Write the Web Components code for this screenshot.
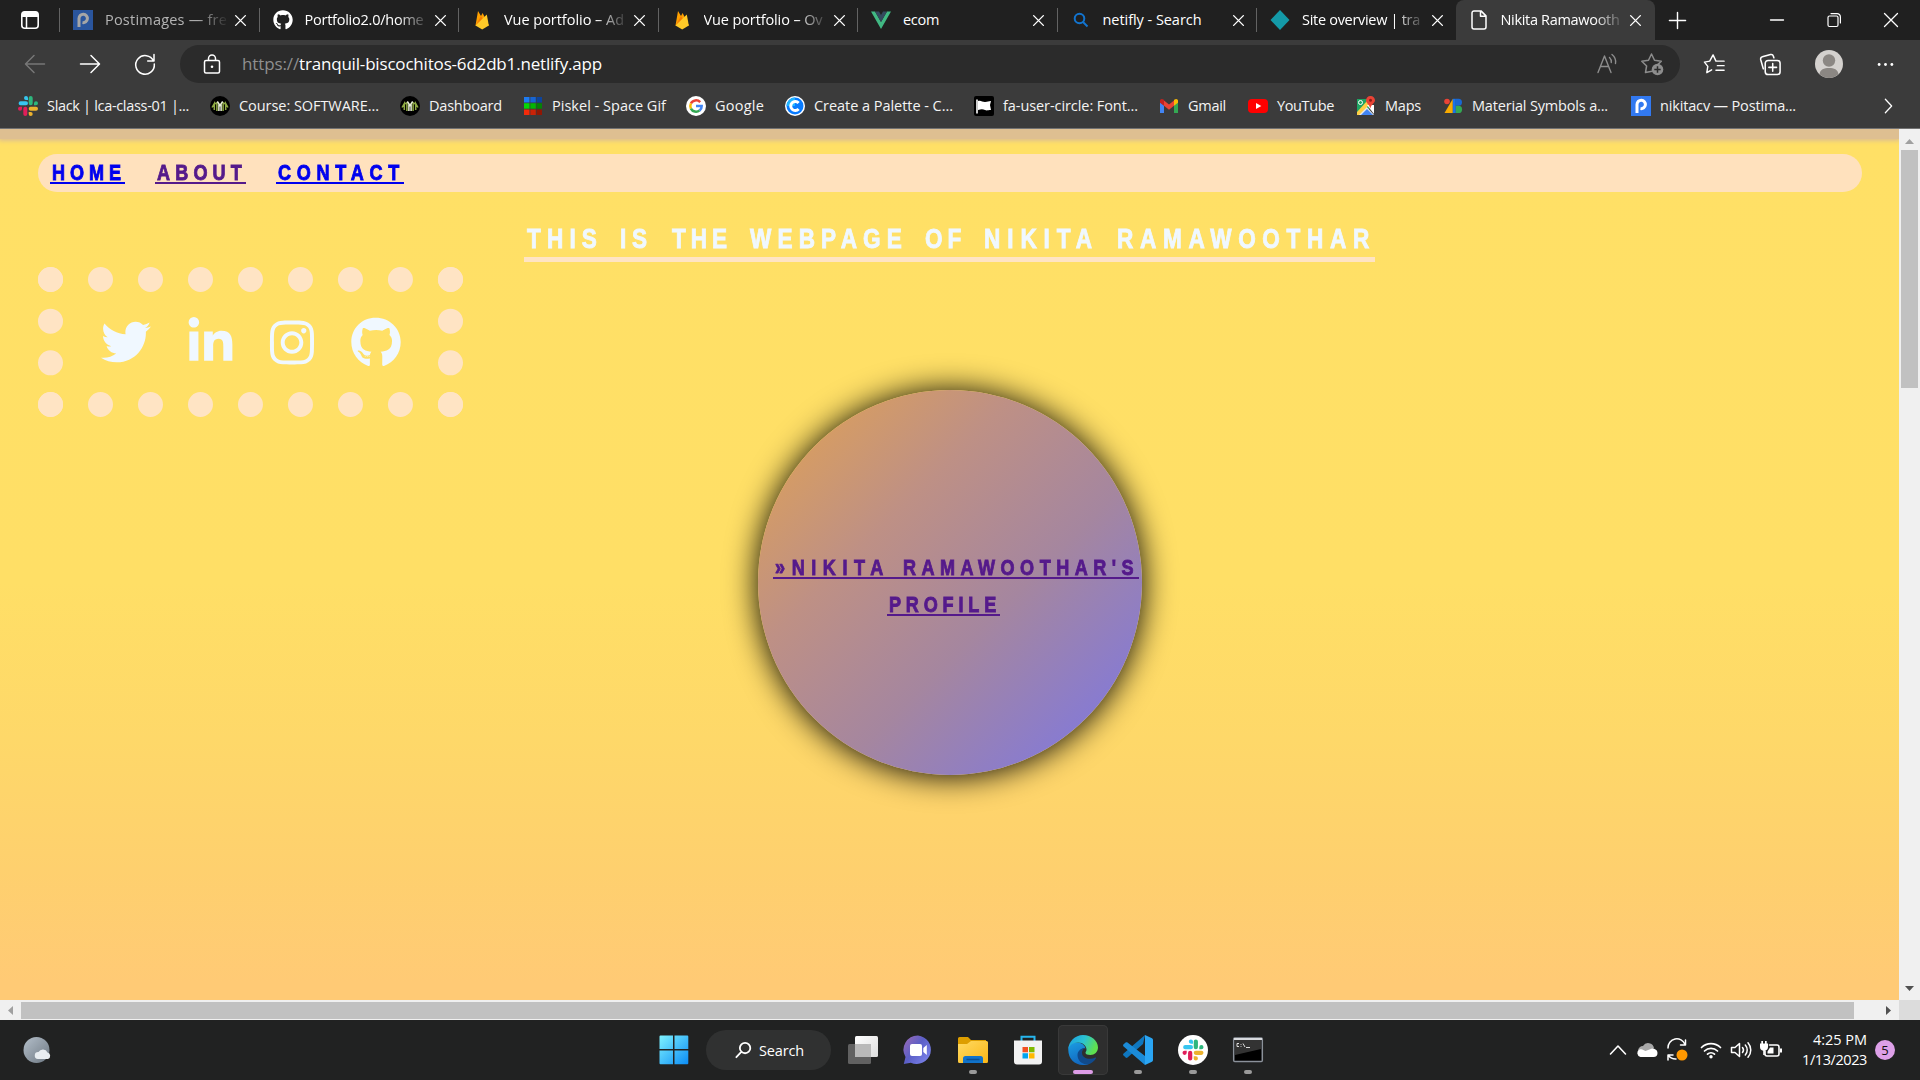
<!DOCTYPE html>
<html lang="en">
<head>
<meta charset="utf-8">
<title>Nikita Ramawoothar</title>
<style>
html,body{margin:0;padding:0;width:1920px;height:1080px;overflow:hidden;background:#202020}
body{font-family:"Open Sans","Noto Sans",sans-serif;font-size:14px;color:#fff;display:flex;flex-direction:column}
</style>
</head>
<body>
<tab-strip>
  <browser-tab icon="postimages" w="122" dim>Postimages — fre</browser-tab>
  <browser-tab icon="github" w="119">Portfolio2.0/home</browser-tab>
  <browser-tab icon="firebase" w="120">Vue portfolio – Ad</browser-tab>
  <browser-tab icon="firebase" w="119">Vue portfolio – Ov</browser-tab>
  <browser-tab icon="vue" w="36" nofade>ecom</browser-tab>
  <browser-tab icon="search" w="99" nofade>netifly - Search</browser-tab>
  <browser-tab icon="diamond" w="118">Site overview | tra</browser-tab>
  <browser-tab icon="page" w="119" active>Nikita Ramawooth</browser-tab>
</tab-strip>
<address-bar></address-bar>
<bookmarks-bar>
  <book-mark icon="slack" w="142" span="192">Slack | lca-class-01 |...</book-mark>
  <book-mark icon="lca" w="140" span="190">Course: SOFTWARE...</book-mark>
  <book-mark icon="lca" w="73" span="123">Dashboard</book-mark>
  <book-mark icon="piskel" w="114" span="163">Piskel - Space Gif</book-mark>
  <book-mark icon="google" w="49" span="99">Google</book-mark>
  <book-mark icon="coolors" w="139" span="189">Create a Palette - C...</book-mark>
  <book-mark icon="fa" w="135" span="185">fa-user-circle: Font...</book-mark>
  <book-mark icon="gmail" w="38" span="89">Gmail</book-mark>
  <book-mark icon="youtube" w="57" span="108">YouTube</book-mark>
  <book-mark icon="maps" w="36" span="87">Maps</book-mark>
  <book-mark icon="material" w="136" span="188">Material Symbols a...</book-mark>
  <book-mark icon="postimages" w="136" span="170">nikitacv — Postima...</book-mark>
</bookmarks-bar>
<page-viewport>
  <nav-pill slot="page">
    <pixel-link w="75"><fit-text w="74" x="2" px>HOME</fit-text></pixel-link>
    <pixel-link w="91" visited><fit-text w="90" x="2" px>ABOUT</fit-text></pixel-link>
    <pixel-link w="128"><fit-text w="127" x="2" px>CONTACT</fit-text></pixel-link>
  </nav-pill>
  <page-title slot="page">
    <fit-text w="76" x="3" px>THIS</fit-text>
    <fit-text w="33" x="17" px>IS</fit-text>
    <fit-text w="60" x="19" px>THE</fit-text>
    <fit-text w="158" x="18" px>WEBPAGE</fit-text>
    <fit-text w="41" x="17" px>OF</fit-text>
    <fit-text w="115" x="18" px>NIKITA</fit-text>
    <fit-text w="259" x="18" px>RAMAWOOTHAR</fit-text>
  </page-title>
  <social-box slot="page"></social-box>
  <profile-orb slot="page">
    <pixel-link w="366" visited><fit-text w="115" x="2" px>»NIKITA</fit-text><fit-text w="236" x="13" px>RAMAWOOTHAR'S</fit-text></pixel-link>
    <pixel-link w="113" visited><fit-text w="112" x="2" px>PROFILE</fit-text></pixel-link>
  </profile-orb>
</page-viewport>
<task-bar></task-bar>

<script>
const slackMark = `<path fill="#36c5f0" d="M8 0a2 2 0 0 0 0 4h2V2a2 2 0 0 0-2-2zM8 5.3H2.6a2 2 0 0 0 0 4H8a2 2 0 0 0 0-4z"/><path fill="#2eb67d" d="M20 7.3a2 2 0 0 0-4 0v2h2a2 2 0 0 0 2-2zM14.7 7.3V2a2 2 0 0 0-4 0v5.3a2 2 0 0 0 4 0z"/><path fill="#ecb22e" d="M12.7 20a2 2 0 0 0 0-4h-2v2a2 2 0 0 0 2 2zM12.7 14.7H18a2 2 0 0 0 0-4h-5.3a2 2 0 0 0 0 4z"/><path fill="#e01e5a" d="M0 12.7a2 2 0 0 0 4 0v-2H2a2 2 0 0 0-2 2zM5.3 12.7V18a2 2 0 0 0 4 0v-5.3a2 2 0 0 0-4 0z"/>`;
const ghMark = `<path fill="currentColor" d="M165.9 397.4c0 2-2.3 3.6-5.2 3.6-3.3.3-5.6-1.3-5.6-3.6 0-2 2.3-3.6 5.2-3.6 3-.3 5.6 1.3 5.6 3.6zm-31.1-4.5c-.7 2 1.3 4.3 4.3 4.9 2.6 1 5.6 0 6.2-2s-1.3-4.3-4.3-5.2c-2.6-.7-5.5.3-6.2 2.3zm44.2-1.7c-2.9.7-4.9 2.6-4.6 4.9.3 2 2.9 3.3 5.9 2.6 2.9-.7 4.9-2.6 4.6-4.6-.3-1.9-3-3.2-5.9-2.9zM244.8 8C106.1 8 0 113.3 0 252c0 110.9 69.8 205.8 169.5 239.2 12.8 2.3 17.3-5.6 17.3-12.1 0-6.2-.3-40.4-.3-61.4 0 0-70 15-84.7-29.8 0 0-11.4-29.1-27.8-36.6 0 0-22.9-15.7 1.6-15.4 0 0 24.9 2 38.6 25.8 21.9 38.6 58.6 27.5 72.9 20.9 2.3-16 8.8-27.1 16-33.7-55.9-6.2-112.3-14.3-112.3-110.5 0-27.5 7.6-41.3 23.6-58.9-2.6-6.5-11.1-33.3 2.6-67.9 20.9-6.5 69 27 69 27 20-5.6 41.5-8.5 62.8-8.5s42.8 2.9 62.8 8.5c0 0 48.1-33.6 69-27 13.7 34.7 5.2 61.4 2.6 67.9 16 17.7 25.8 31.5 25.8 58.9 0 96.5-58.9 104.2-114.8 110.5 9.2 7.9 17 22.9 17 46.4 0 33.7-.3 75.4-.3 83.6 0 6.5 4.6 14.4 17.3 12.1C428.2 457.8 496 362.9 496 252 496 113.3 383.5 8 244.8 8z"/>`;
const ln = (d, w = 1.5) => `<path fill="none" stroke="currentColor" stroke-width="${w}" stroke-linecap="round" stroke-linejoin="round" d="${d}"/>`;
const ICONS = {
  workspace: ['0 0 20 20', `<rect x="1.8" y="1.8" width="16.4" height="16.4" rx="3" fill="none" stroke="#fff" stroke-width="1.6"/><path fill="#fff" d="M2 4.500a3 3 0 0 1 3-3h10a3 3 0 0 1 3 3V7H2z"/>` + ln('M6.500 7v11', 1.5)],
  postimages: ['0 0 20 20', `<path fill="#3279f0" d="M0 0h20v20H0z"/><path fill="none" stroke="#fff" stroke-width="3" d="M6 17V8.500a4.200 4.200 0 1 1 3.500 4.100"/>`],
  github: ['0 0 496 512', ghMark],
  firebase: ['0 0 20 20', `<path fill="#ffa000" d="M3.500 15.500 6 1l3 5 1.600-3L17 15.500z"/><path fill="#f57c00" d="M3.500 15.500 9 6l2.500 4z"/><path fill="#ffca28" d="M3.500 15.500 14.800 4.500 16.800 15.500 10.200 19.600z"/>`],
  vue: ['0 0 20 20', `<path fill="#41b883" d="M0 1.500h4L10 12l6-10.500h4L10 19z"/><path fill="#34495e" d="M4 1.500h4L10 5l2-3.500h4L10 12z"/>`],
  search: ['0 0 20 20', `<g fill="none" stroke="#1274cf" stroke-width="2"><circle cx="8.500" cy="8.500" r="4.800"/><path d="m12 12 4.500 4.500"/></g>`],
  diamond: ['0 0 20 20', `<path fill="#149aa8" d="m10 0 9.500 10L10 20 .5 10z"/>`],
  page: ['0 0 20 20', ln('M5 .9h7l5 5v11.200a2 2 0 0 1-2 2H5a2 2 0 0 1-2-2V2.900a2 2 0 0 1 2-2zM11.500 1v5.300H17')],
  close: ['0 0 12 12', ln('m1.500 1.500 9 9m0-9-9 9', 1.3)],
  plus: ['0 0 20 20', ln('M10 1.500v17M1.500 10h17')],
  min: ['0 0 16 16', ln('M1.500 8h13', 1.3)],
  restore: ['0 0 16 16', ln('M4 4h6.500a1.500 1.500 0 0 1 1.500 1.500V13a1.500 1.500 0 0 1-1.500 1.500H3.500A1.500 1.500 0 0 1 2 13V5.500A1.500 1.500 0 0 1 3.500 4zM5 1.600h6a3.300 3.300 0 0 1 3.400 3.300V11', 1.2)],
  winclose: ['0 0 16 16', ln('m1.500 1.500 13 13m0-13-13 13', 1.3)],
  back: ['0 0 22 22', ln('M20.500 11H2M10 2.500 1.500 11l8.500 8.500')],
  fwd: ['0 0 22 22', ln('M1.500 11H20M12 2.500 20.500 11 12 19.500')],
  reload: ['0 0 22 22', ln('M19.500 8A9.300 9.300 0 1 0 20.300 11M20 1.500V8h-6.300')],
  lock: ['0 0 20 20', ln('M4 6.500h12a1.500 1.500 0 0 1 1.500 1.500v9.500A1.500 1.500 0 0 1 16 19H4a1.500 1.500 0 0 1-1.500-1.500V8A1.500 1.500 0 0 1 4 6.500zM6.500 6.500V4.500a3.500 3.500 0 0 1 7 0v2') + '<circle cx="10" cy="12.800" r="1.300" fill="currentColor"/>'],
  read: ['0 0 22 22', ln('M2 19.500 8.500 3 15 19.500M4.300 13.500h8.400M13.500 4.500a6 6 0 0 1 1.800 5M16 1.500a9.500 9.500 0 0 1 3.500 9', 1.4)],
  staradd: ['0 0 24 24', ln('M12 19.300 5.500 20.500 6.600 14 1.800 9.300l6.700-1L11.500 2l3 6.300 6.800 1-3.500 3.300', 1.5) + '<circle cx="17.500" cy="17.500" r="5.800" fill="currentColor"/><path stroke="#2b2b2b" stroke-width="1.500" d="M17.500 14.300v6.400M14.300 17.500h6.400"/>'],
  favs: ['0 0 24 24', ln('M9 17.500 4 20.500 5 14 1.500 9.500l5.500-1L10.500 2l3 6.500H22M15 13.200h7M13.500 18h8.500')],
  collections: ['0 0 24 24', ln('M4.500 16.500 1.800 7a2.500 2.500 0 0 1 1.700-3l8.500-2.400A2.500 2.500 0 0 1 15 3.300l.5 1.700M9.500 7.800H19a3 3 0 0 1 3 3v8.700a3 3 0 0 1-3 3H9.500a3 3 0 0 1-3-3v-8.700a3 3 0 0 1 3-3zM14.300 11v8M10.300 15h8', 1.6)],
  avatar: ['0 0 28 28', `<circle cx="14" cy="14" r="14" fill="#d4d1ce"/><circle cx="14" cy="10.500" r="6.200" fill="#8b8783"/><path fill="#8b8783" d="M4.500 24.300C5 19.500 9 18 14 18s9 1.500 9.500 6.300A14 14 0 0 1 14 28a14 14 0 0 1-9.500-3.700z"/>`],
  dots: ['0 0 20 20', `<g fill="#fff"><circle cx="3.300" cy="10" r="1.500"/><circle cx="10" cy="10" r="1.500"/><circle cx="16.700" cy="10" r="1.500"/></g>`],
  slack: ['0 0 20 20', slackMark],
  lca: ['0 0 20 20', `<circle cx="10" cy="10" r="10" fill="#000"/><path d="M2 11.500 4.300 7.500V14M4.300 8l2.600-1.200V15M18 11.500l-2.300-4V14M15.700 8l-2.600-1.200V15" stroke="#8fab45" stroke-width="1.500" fill="none"/><path d="m7.300 5.500 2.700 4 2.700-4M8.900 8.500V15M11.100 8.500V15" stroke="#e8efd8" stroke-width="1.500" fill="none"/>`],
  piskel: ['0 0 18 20', `<path fill="#1d7bf2" d="M0 1h5.500v5.500H0z"/><path fill="#1765d4" d="M6.300 1h5.500v5.500H6.300z"/><path fill="#0d449c" d="M12.500 1H18v5.500h-5.500z"/><path fill="#06d506" d="M0 7.200h5.500v5.500H0z"/><path fill="#04b604" d="M6.300 7.200h5.500v5.500H6.300z"/><path fill="#058205" d="M12.500 7.200H18v5.500h-5.500z"/><path fill="#f42b0a" d="M0 13.500h5.500V19H0z"/><path fill="#cb2206" d="M6.300 13.500h5.500V19H6.300z"/><path fill="#911704" d="M12.500 13.500H18V19h-5.500z"/>`],
  google: ['0 0 20 20', `<circle cx="10" cy="10" r="10" fill="#fff"/><g fill="none" stroke-width="2.500"><path stroke="#ea4335" d="M14.200 6.200A5.700 5.700 0 0 0 4.900 7.500"/><path stroke="#fbbc05" d="M4.900 7.500a5.700 5.700 0 0 0 0 5.100"/><path stroke="#34a853" d="M4.900 12.600a5.700 5.700 0 0 0 8.700 1.800"/><path stroke="#4285f4" d="M13.600 14.400A5.500 5.500 0 0 0 15.700 10H10"/></g>`],
  coolors: ['0 0 20 20', `<circle cx="10" cy="10" r="10" fill="#fff"/><circle cx="10" cy="10" r="8.500" fill="#087bff"/><path fill="#20b5ff" d="M1.500 10A8.500 8.500 0 0 1 10 1.500V10z"/><path d="M13.600 7a4.500 4.500 0 1 0 0 6" stroke="#fff" stroke-width="3" fill="none"/>`],
  fa: ['0 0 20 20', `<rect width="20" height="20" rx="2" fill="#000"/><path d="M3 3.500v14" stroke="#fff" stroke-width="1.600"/><path fill="#fff" d="M4 5c3-1 4 1 7 1s3-1 6-1l-1 4 1 5c-3 0-4 1-6 0s-4-1-7 0z"/>`],
  gmail: ['0 0 20 20', `<path fill="#4285f4" d="M1 6v11h4V9.500z"/><path fill="#34a853" d="M19 6v11h-4V9.500z"/><path fill="#ea4335" d="M5 4.500 10 8.500l5-4v5.200l-5 4-5-4z"/><path fill="#c5221f" d="M1 4.800C1 3 3 2.300 4.400 3.500L5 4v5.700L1 6.700z"/><path fill="#fbbc04" d="M19 4.800c0-1.800-2-2.500-3.400-1.300L15 4v5.700l4-3z"/>`],
  youtube: ['0 0 20 20', `<rect y="3" width="20" height="14" rx="4" fill="#f00"/><path fill="#fff" d="m8 7 5.300 3L8 13z"/>`],
  maps: ['0 0 20 20', `<path fill="#1fa463" d="M1 3h12v13H1z"/><path fill="#e8eaed" d="m2 19 8-9 8 9z"/><path fill="#4285f4" d="m5 19 6-6 6 6z"/><path fill="#ffcf44" d="m1 16 10-11 3 3L3 19H1z"/><path fill="#fff" d="m11 9 7 9V9z"/><path fill="#ea4335" d="M14.500 0A4.300 4.300 0 0 0 10 4.300c0 3 3.300 4 4.300 8.200C15.300 8.300 19 7 19 4.300A4.300 4.300 0 0 0 14.500 0z"/><circle cx="14.500" cy="4.300" r="1.500" fill="#8c1d18"/><circle cx="4.500" cy="6.500" r="2" fill="none" stroke="#fff"/>`],
  material: ['0 0 20 20', `<circle cx="4" cy="5.500" r="2.800" fill="#ea4335"/><path fill="#f9ab00" d="M9.800 2.800V17H1.500z"/><path fill="#1a73e8" d="M9.800 2.800h3V17h-3z"/><path fill="#1967d2" d="M12.800 2.800h2.700a3.500 3.500 0 0 1 0 7h-2.700z"/><path fill="#34a853" d="M12.800 9.800h2.700a3.600 3.600 0 0 1 0 7.200h-2.700z"/>`],
  chevr: ['0 0 12 20', ln('m2.500 2.500 7 7.500-7 7.500', 1.4)],
  twitter: ['0 0 512 512', `<path fill="currentColor" d="M459.370 151.716c.325 4.548.325 9.097.325 13.645 0 138.720-105.583 298.558-298.558 298.558-59.452 0-114.680-17.219-161.137-47.106 8.447.974 16.568 1.299 25.340 1.299 49.055 0 94.213-16.568 130.274-44.832-46.132-.975-84.792-31.188-98.112-72.772 6.498.974 12.995 1.624 19.818 1.624 9.421 0 18.843-1.300 27.614-3.573-48.081-9.747-84.143-51.980-84.143-102.985v-1.299c13.969 7.797 30.214 12.670 47.431 13.319-28.264-18.843-46.781-51.005-46.781-87.391 0-19.492 5.197-37.360 14.294-52.954 51.655 63.675 129.300 105.258 216.365 109.807-1.624-7.797-2.599-15.918-2.599-24.040 0-57.828 46.782-104.934 104.934-104.934 30.213 0 57.502 12.670 76.670 33.137 23.715-4.548 46.456-13.320 66.599-25.340-7.798 24.366-24.366 44.833-46.132 57.827 21.117-2.273 41.584-8.122 60.426-16.243-14.292 20.791-32.161 39.308-52.628 54.253z"/>`],
  linkedin: ['0 0 448 512', `<path fill="currentColor" d="M100.280 448H7.400V148.900h92.880zM53.790 108.100C24.090 108.100 0 83.500 0 53.800a53.790 53.790 0 0 1 107.580 0c0 29.700-24.100 54.300-53.790 54.300zM447.900 448h-92.680V302.400c0-34.700-.7-79.200-48.290-79.200-48.290 0-55.690 37.700-55.690 76.700V448h-92.780V148.900h89.080v40.800h1.300c12.400-23.500 42.690-48.300 87.880-48.300 94 0 111.280 61.900 111.280 142.300V448z"/>`],
  instagram: ['0 0 448 512', `<path fill="currentColor" d="M224.100 141c-63.600 0-114.900 51.300-114.900 114.900s51.300 114.900 114.900 114.900S339 319.500 339 255.900 287.700 141 224.100 141zm0 189.600c-41.100 0-74.700-33.500-74.700-74.700s33.500-74.700 74.700-74.700 74.700 33.500 74.700 74.700-33.600 74.700-74.700 74.700zm146.400-194.300c0 14.900-12 26.800-26.800 26.800-14.900 0-26.800-12-26.800-26.800s12-26.800 26.800-26.800 26.800 12 26.800 26.800zm76.100 27.200c-1.700-35.900-9.900-67.700-36.200-93.900-26.200-26.200-58-34.400-93.900-36.200-37-2.100-147.900-2.100-184.900 0-35.800 1.700-67.600 9.900-93.900 36.100s-34.400 58-36.200 93.900c-2.100 37-2.100 147.900 0 184.900 1.700 35.900 9.900 67.700 36.200 93.900s58 34.400 93.900 36.200c37 2.100 147.900 2.100 184.900 0 35.900-1.700 67.700-9.900 93.900-36.200 26.200-26.200 34.400-58 36.200-93.900 2.100-37 2.100-147.800 0-184.800zM398.800 388c-7.800 19.600-22.900 34.700-42.600 42.600-29.500 11.700-99.500 9-132.100 9s-102.700 2.600-132.100-9c-19.600-7.800-34.700-22.900-42.600-42.600-11.700-29.500-9-99.500-9-132.100s-2.600-102.700 9-132.100c7.800-19.600 22.900-34.700 42.600-42.600 29.500-11.700 99.500-9 132.100-9s102.700-2.600 132.100 9c19.600 7.800 34.700 22.900 42.600 42.600 11.700 29.500 9 99.500 9 132.100s2.700 102.700-9 132.100z"/>`],
  weather: ['0 0 30 28', `<defs><linearGradient id="m" x2="1" y2="1"><stop stop-color="#b4bfca"/><stop offset="1" stop-color="#6d7882"/></linearGradient></defs><circle cx="13.500" cy="14" r="13" fill="url(#m)"/><path fill="#e8edf1" d="M15 23a3.500 3.500 0 0 1 .5-7 5 5 0 0 1 9 .5A3.400 3.400 0 0 1 25 23z"/>`],
  start: ['0 0 30 30', `<defs><linearGradient id="s" x2="1" y2="1"><stop stop-color="#7ff3ff"/><stop offset="1" stop-color="#0b8cf5"/></linearGradient></defs><path fill="url(#s)" d="M1.500.5H14V14H.500V1.500a1 1 0 0 1 1-1zM15.500.5h12.800a1 1 0 0 1 1 1V14H15.500zM.500 15.500H14v13.800H1.500a1 1 0 0 1-1-1zM15.500 15.500h13.800v12.800a1 1 0 0 1-1 1H15.500z"/>`],
  lens: ['0 0 20 20', ln('M17 7.800a5.800 5.800 0 1 1-11.600 0 5.800 5.800 0 0 1 11.600 0zM7 12.200 1.500 18', 2)],
  taskview: ['0 0 30 30', `<defs><linearGradient id="t" x2="1" y2="1"><stop stop-color="#fff"/><stop offset="1" stop-color="#ddd"/></linearGradient></defs><rect x="7" y="1" width="23" height="21" rx="1.500" fill="url(#t)"/><rect x="0" y="9" width="23" height="20" rx="1.500" fill="#6c6c6c" fill-opacity=".85"/><path fill="#b9b9b9" d="M7 9h16v13H7z"/>`],
  chat: ['0 0 30 30', `<defs><linearGradient id="c" x2="1" y2=".8"><stop stop-color="#a06bb5"/><stop offset=".5" stop-color="#5b5fc7"/><stop offset="1" stop-color="#7b83eb"/></linearGradient></defs><path fill="url(#c)" d="M15 .5A14.300 14.300 0 0 0 2.500 22L.8 29l7-1.200A14.300 14.300 0 1 0 15 .5z"/><rect x="7" y="9" width="12" height="12" rx="2" fill="#fff"/><path fill="#fff" d="m20.300 13 3.500-3v10l-3.500-3z"/>`],
  explorer: ['0 0 30 30', `<defs><linearGradient id="e" x2="1" y2="1"><stop stop-color="#ffda62"/><stop offset="1" stop-color="#fbb716"/></linearGradient></defs><path fill="#dd9e00" d="M0 3.500A1.500 1.500 0 0 1 1.500 2H10l3 3h15v6H0z"/><path fill="url(#e)" d="M0 9h9l4-3h15.500A1.500 1.500 0 0 1 30 7.500v19a1.500 1.500 0 0 1-1.500 1.500h-27A1.500 1.500 0 0 1 0 26.500z"/><path fill="#1173ca" d="M5 28v-4.500A2.500 2.500 0 0 1 7.500 21h15a2.500 2.500 0 0 1 2.500 2.500V28z"/><path stroke="#0b4f93" stroke-width="1.500" d="M8.500 24.500h13"/>`],
  store: ['0 0 30 30', `<path fill="none" stroke="#26b6ee" stroke-width="2" d="M8.500 7V1.700h13V7"/><path fill="#f2f2f2" d="M1 5.500h28v21a3 3 0 0 1-3 3H4a3 3 0 0 1-3-3z"/><path fill="#f25022" d="M9.500 12H15v5.300H9.500z"/><path fill="#7fba00" d="M16 12h5.500v5.300H16z"/><path fill="#00a4ef" d="M9.500 18.200H15v5.300H9.500z"/><path fill="#ffb900" d="M16 18.200h5.500v5.300H16z"/>`],
  edge: ['0 0 30 30', `<defs><linearGradient id="g" x2="1" y2=".35"><stop stop-color="#1b9de2"/><stop offset=".55" stop-color="#2bc3d2"/><stop offset="1" stop-color="#5fe04f"/></linearGradient><linearGradient id="h" x2=".4" y2="1"><stop stop-color="#1b9de2"/><stop offset="1" stop-color="#1268c0"/></linearGradient></defs><path fill="url(#h)" d="M.3 13C1.300 9 6 7 10 7.500c4 .5 7 3 7.500 6-2.500-1-5.500 1-5.500 5 0 5 5 9.500 10 10-2 1-4.500 1.500-7 1.500C6.500 30 .3 23.500.3 15z"/><path fill="url(#g)" d="M.3 14.500C.5 6.500 7 0 15 0c8.500 0 15 6 15 12.500 0 4.500-3.500 7.500-7.500 7.500-3 0-5-1-5-2.300 0-.9 1-1.200 1-3.200C18.500 11 15 7.500 10 7.500 5 7.500 1 10.500.3 14.500z"/><path fill="#114a8b" d="M17 13.200c-3.500-.5-7.500 2.300-7.500 7 0 5.300 5 9.800 10.500 9 3.500-.7 6.500-3.200 8-6 .3-.6-.2-.9-.7-.6-5 2.500-13.300 1.200-13.300-4.800 0-2 1.300-4.300 3-4.600z"/>`],
  vscode: ['0 0 30 30', `<path fill="#0f77bf" d="m22 0-2 9L4.500 22.500c-.6.500-1.300.5-1.900 0L.6 20.600c-.7-.6-.7-1.600 0-2.200z"/><path fill="#1b8bd8" d="M22 30 .6 11.500c-.7-.6-.7-1.600 0-2.200l2-1.800c.6-.5 1.300-.5 1.900 0L22 21z"/><path fill="#2aa5f3" d="M22 0 29 3.300a1.800 1.800 0 0 1 1 1.600v20.200c0 .7-.4 1.300-1 1.600L22 30z"/>`],
  slackapp: ['0 0 30 30', `<circle cx="15" cy="15" r="15" fill="#fff"/><g transform="translate(4.500 4.500) scale(1.050)">${slackMark}</g>`],
  cmd: ['0 0 30 26', `<rect x=".7" y="1" width="28.600" height="23.500" rx="1" fill="#000" stroke="#8b919a" stroke-width="1.500"/><path fill="#d8dade" d="M1 1h28v2H1z"/><path fill="#333" d="M2 3h26v9L2 18z"/><path stroke="#ddd" stroke-width="1" fill="none" d="M6 6.500H4v3h2M8 7v.8M8 9v.8M10 6.500l2 3.500M13 10.500h4"/>`],
  up: ['0 0 20 20', ln('m2.500 14 7.500-8 7.500 8', 1.6)],
  cloud: ['0 0 22 16', `<path fill="#a8a8a8" d="M2 9a5 5 0 0 1 5-5 6 6 0 0 1 11 2l-9 6z"/><path fill="#fff" d="M4.500 15a4 4 0 0 1-1-7.500c2.500-1 4 .5 6 1.500L16 6.500c3 0 5.500 1.500 5.500 4.500a4 4 0 0 1-4 4z"/>`],
  sync: ['0 0 22 22', ln('M2 9A8.800 8.800 0 0 1 19 5.500M19.500 1v5H14.500M2 21v-5h5M2.500 16.500A9 9 0 0 0 10 20') + '<circle cx="16" cy="16" r="5.500" fill="#ff9800"/>'],
  wifi: ['0 0 22 20', ln('M1.500 7.500a13.500 13.500 0 0 1 19 0M4.500 11a9.300 9.300 0 0 1 13 0M7.500 14.200a5 5 0 0 1 7 0', 1.7) + '<circle cx="11" cy="16.800" r="1.700" fill="#fff"/>'],
  volume: ['0 0 22 20', ln('M1.500 7.500v5h3.500l4.500 4v-13L5 7.500zM12.500 7.500a4 4 0 0 1 0 5M15.300 5a7.500 7.500 0 0 1 0 10M18 2.700a11 11 0 0 1 0 14.600', 1.5)],
  battery: ['0 0 22 20', ln('M9.500 5H17a2 2 0 0 1 2 2v7a2 2 0 0 1-2 2H7a2 2 0 0 1-2-2v-3', 1.6) + '<path fill="#fff" d="M10 7.500h3.500v6H7.500v-2zM20 8.500h2v4h-2zM0 3.500h8V7a4 4 0 0 1-3.200 3.800V15H3.200v-4.200A4 4 0 0 1 0 7zM1.300 1h1.700v2.500H1.300zM5 1h1.700v2.500H5z"/>'],
};
const define = (name, html, setup) => customElements.define(name, class extends HTMLElement {
  connectedCallback() {
    if (this.shadowRoot) return;
    const t = document.createElement('template');
    t.innerHTML = typeof html === 'function' ? html(this) : html;
    this.attachShadow({ mode: 'open' }).append(t.content.cloneNode(true));
    if (setup) setup(this);
  }
});
const a = (e, n, d = '') => e.getAttribute(n) ?? d;

define('ui-icon', e => {
  const [vb, body] = ICONS[a(e, 'name')];
  const w = a(e, 'w', '20'), h = a(e, 'h', w);
  return `<style>:host{display:block;flex:none;width:${w}px;height:${h}px}svg{display:block;overflow:visible}</style><svg width="${w}" height="${h}" viewBox="${vb}">${body}</svg>`;
});

define('browser-tab', e => {
  const act = e.hasAttribute('active');
  return `<style>:host{display:flex;align-items:center;flex:none;width:${act ? 199 : 199.500}px;height:40px;box-sizing:border-box;padding-left:13px;font-size:14.500px;${act ? 'background:#3b3b3b;border-radius:8px 8px 0 0;' : ''}}
  .fav{width:20px;display:flex;justify-content:center;margin-right:12px;margin-left:${act ? 0 : 1}px;${e.hasAttribute('dim') ? 'opacity:.6' : ''}}
  .t{width:122px;line-height:40px;height:40px;overflow:hidden;color:${e.hasAttribute('dim') ? '#b4b4b4' : '#fff'};${e.hasAttribute('nofade') ? '' : '-webkit-mask-image:linear-gradient(90deg,#000 76%,transparent 102%);mask-image:linear-gradient(90deg,#000 76%,transparent 102%)'}}
  .c{margin-left:${act ? 6 : 7}px}
  i{width:1px;height:24px;background:#636363;margin-left:-13px;margin-right:12px;${act ? 'visibility:hidden' : ''}}</style>
  <i></i><div class="fav"><ui-icon name="${a(e, 'icon')}" w="20"></ui-icon></div><div class="t"><fit-text w="${a(e, 'w')}">${e.textContent}</fit-text></div><div class="c"><ui-icon name="close" w="13"></ui-icon></div>`;
});

define('tab-strip', `<style>:host{display:flex;align-items:center;height:40px;background:#202020;flex:none}
  .ws{width:59px;display:flex;padding-left:20px;box-sizing:border-box}.new{margin-left:13px;flex:1}.win{display:flex;gap:41px;padding-right:21px;align-items:center}</style>
  <div class="ws"><ui-icon name="workspace" w="20"></ui-icon></div><slot></slot><div class="new"><ui-icon name="plus" w="19"></ui-icon></div>
  <div class="win"><ui-icon name="min" w="16"></ui-icon><ui-icon name="restore" w="16"></ui-icon><ui-icon name="winclose" w="16"></ui-icon></div>`);

define('address-bar', `<style>:host{display:flex;align-items:center;height:48px;background:#3b3b3b;flex:none;box-sizing:border-box;padding:0 25px 0 24px}
  .nav{display:flex;gap:33px;width:156px;margin-bottom:1px}.dim{color:#777}
  .url{width:1500px;height:38px;border-radius:19px;background:#2b2b2b;display:flex;align-items:center;box-sizing:border-box;padding:0 16px 0 22px;font-size:17px}
  .p{color:#8f8f8f;margin-left:20px}.p,.h{padding-bottom:2px}.h{flex:1}.r{display:flex;gap:22px;color:#8d8d8d;align-items:center}
  .tools{display:flex;align-items:center;margin-left:23px;flex:1;justify-content:space-between}</style>
  <div class="nav"><ui-icon class="dim" name="back" w="22"></ui-icon><ui-icon name="fwd" w="22"></ui-icon><ui-icon name="reload" w="22"></ui-icon></div>
  <div class="url"><ui-icon name="lock" w="20"></ui-icon><div class="p"><fit-text w="57">https://</fit-text></div><div class="h"><fit-text w="303">tranquil-biscochitos-6d2db1.netlify.app</fit-text></div>
  <div class="r"><ui-icon name="read" w="22"></ui-icon><ui-icon name="staradd" w="24"></ui-icon></div></div>
  <div class="tools"><ui-icon name="favs" w="23"></ui-icon><ui-icon name="collections" w="23"></ui-icon><ui-icon name="avatar" w="28"></ui-icon><ui-icon name="dots" w="19"></ui-icon></div>`);

define('book-mark', e => `<style>:host{display:flex;align-items:center;flex:none;gap:9px;width:${a(e, 'span')}px;font-size:14.500px;color:#f4f4f4}</style>
  <ui-icon name="${a(e, 'icon')}" w="20"></ui-icon><fit-text w="${a(e, 'w')}">${e.textContent}</fit-text>`);
define('bookmarks-bar', `<style>:host{display:flex;align-items:center;height:41px;box-sizing:border-box;padding:0 26px 5px 18px;background:#3b3b3b;border-bottom:1px solid #727272;flex:none}
  .m{flex:1;display:flex;justify-content:flex-end}</style><slot></slot><div class="m"><ui-icon name="chevr" w="11" h="18"></ui-icon></div>`);

define('page-viewport', `<style>:host{display:grid;grid-template:871px 20px / 1899px 21px;height:891px;flex:none}
  .page{background:linear-gradient(180deg,#ffe066 0,#ffdf66 52%,#fed869 70%,#fed06e 85%,#ffca75 98%);display:flex;flex-direction:column;align-items:flex-start;padding:0 37px 0 38px;overflow:hidden}
  .edge{height:10px;width:1899px;margin-left:-38px;background:#debf91;box-shadow:0 1px 4px 1px #debf91;flex:none}
  .v{background:#f0f0f0;display:flex;flex-direction:column;align-items:center;justify-content:space-between}
  .v b{width:17px;height:238px;background:#c1c1c1;margin-top:6px}.v .s{flex:1}
  .h{background:#f0f0f0;display:flex;align-items:center;padding:0 8px}.h b{height:17px;width:1833px;background:#c1c1c1;margin-left:8px}.h .s{flex:1}
  .k{background:#dcdcdc}svg{display:block}</style>
  <div class="page"><div class="edge"></div><slot name="page"></slot></div>
  <div class="v"><svg width="9" height="5" style="margin-top:10px"><path fill="#a0a0a0" d="M0 5 4.500 0 9 5z"/></svg><b></b><div class="s"></div><svg width="9" height="5" style="margin-bottom:9px"><path fill="#505050" d="M0 0h9L4.500 5z"/></svg></div>
  <div class="h"><svg width="5" height="9"><path fill="#a0a0a0" d="M5 0v9L0 4.500z"/></svg><b></b><div class="s"></div><svg width="5" height="9"><path fill="#505050" d="M0 0v9l5-4.500z"/></svg></div><div class="k"></div>`);

define('pixel-link', e => `<style>:host{display:flex;flex:none;width:${a(e, 'w')}px;height:22px;line-height:18px;font-size:22px;color:${e.hasAttribute('visited') ? '#551a8b' : '#0000ee'};border-bottom:2px solid currentColor;box-sizing:border-box}</style><slot></slot>`);
define('nav-pill', `<style>:host{display:flex;align-items:center;align-self:stretch;height:38px;margin-top:15px;border-radius:19px;background:#ffe1bd;padding:0 12px;box-sizing:border-box;gap:30px;flex:none}</style><slot></slot>`);
define('page-title', `<style>:host{display:flex;width:851px;height:40px;box-sizing:border-box;border-bottom:5px solid #ffe4c4;align-self:center;margin:30px 1px 0 0;line-height:31px;font-size:27.500px;color:#f0f8ff;flex:none}</style><slot></slot>`);
define('social-box', `<style>:host{display:flex;align-items:center;width:425px;height:150px;box-sizing:border-box;border:25px dotted #ffe4c4;margin-top:5px;gap:37px;padding:0 0 0 38px;color:#f0f8ff;flex:none}</style>
  <ui-icon name="twitter" w="50"></ui-icon><ui-icon name="linkedin" w="45" h="50"></ui-icon><ui-icon name="instagram" w="44" h="51"></ui-icon><ui-icon name="github" w="50" h="51"></ui-icon>`);
define('profile-orb', `<style>:host{display:flex;flex-direction:column;align-items:center;align-self:center;width:384px;height:385px;box-sizing:border-box;border-radius:50%;margin-top:-27px;padding:167px 0 0 2px;gap:15px;background:linear-gradient(135deg,#d79d62 12%,#be9085 34%,#a5869f 60%,#857ad5 88%);box-shadow:0 1px 32px #000;flex:none}
  ::slotted(:last-child){margin-right:15px}::slotted(:first-child){margin-left:10px}</style><slot></slot>`);

define('task-app', e => `<style>:host{display:flex;flex-direction:column;align-items:center;box-sizing:border-box;width:50px;height:50px;padding-top:10px;border-radius:5px;flex:none;${e.hasAttribute('active') ? 'background:#2e2e2e;box-shadow:inset 0 0 0 1px #393939' : ''}}
  i{height:4px;border-radius:2px;margin-top:5px;${e.hasAttribute('active') ? 'width:20px;background:#dc9ce6' : e.hasAttribute('open') ? 'width:8px;background:#9a9a9a' : ''}}</style><ui-icon name="${a(e, 'icon')}" w="30"></ui-icon><i></i>`);
define('task-bar', `<style>:host{display:grid;grid-template-columns:649px 1fr auto;height:60px;background:#212222;flex:none;align-items:center}
  .w{padding-left:23px}.apps{display:flex;gap:5px;align-items:center}
  .q{display:flex;align-items:center;width:125px;height:40px;border-radius:20px;background:#303131;box-sizing:border-box;padding-left:29px;gap:6px;font-size:14.500px;margin:0 2px 0 2px}
  .tray{display:flex;align-items:center;padding-right:25px}.tray ui-icon{margin-right:8px}
  .clock{display:flex;flex-direction:column;align-items:flex-end;line-height:20px;font-size:14.500px;width:85px;margin-right:8px}
  .n{width:20px;height:20px;border-radius:50%;background:#dda0e8;color:#111;text-align:center;line-height:20px;font-size:13px}</style>
  <div class="w"><ui-icon name="weather" w="30" h="28"></ui-icon></div>
  <div class="apps"><task-app icon="start"></task-app><div class="q"><ui-icon name="lens" w="18"></ui-icon><fit-text w="45">Search</fit-text></div>
  <task-app icon="taskview"></task-app><task-app icon="chat"></task-app><task-app icon="explorer" open></task-app><task-app icon="store"></task-app><task-app icon="edge" active></task-app><task-app icon="vscode" open></task-app><task-app icon="slackapp" open></task-app><task-app icon="cmd" open></task-app></div>
  <div class="tray"><ui-icon name="up" w="20"></ui-icon><ui-icon name="cloud" w="22" h="16"></ui-icon><ui-icon name="sync" w="22" style="margin-right:12px"></ui-icon><ui-icon name="wifi" w="22"></ui-icon><ui-icon name="volume" w="22"></ui-icon><ui-icon name="battery" w="22" style="margin-right:0"></ui-icon>
  <div class="clock"><fit-text w="54">4:25 PM</fit-text><fit-text w="65">1/13/2023</fit-text></div><div class="n">5</div></div>`);

/* Spreads a label over an exact width by adjusting its letter spacing.
   Registered last, so that every parent has already set its font size. */
define('fit-text', e => {
  const px = e.hasAttribute('px');
  return `<style>:host{display:block;flex:none;width:${a(e, 'w')}px;margin-left:${a(e, 'x', '0')}px;white-space:nowrap}
  span{display:inline-block;transform-origin:0 50%;${px ? 'transform:scaleX(.82);font-family:"Liberation Sans",sans-serif;font-weight:700;-webkit-text-stroke:.9px currentColor' : ''}}</style><span><slot></slot></span>`;
}, e => {
  const s = e.shadowRoot.querySelector('span');
  const k = e.hasAttribute('px') ? .82 : 1;
  const n = e.textContent.length;
  s.style.letterSpacing = (+a(e, 'w') / k - s.getBoundingClientRect().width / k) / n + 'px';
});
</script>
</body>
</html>
